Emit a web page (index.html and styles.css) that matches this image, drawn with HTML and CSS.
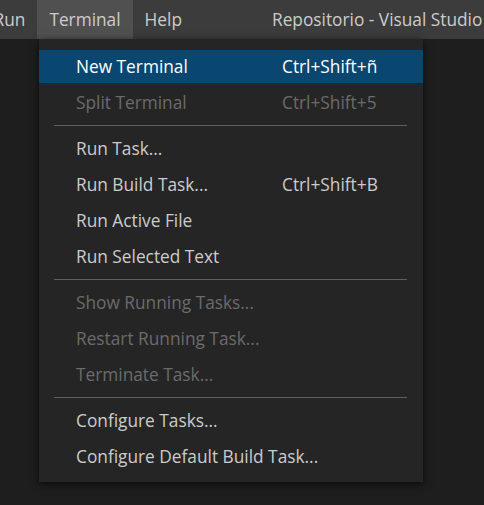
FILE: index.html
```html
<!DOCTYPE html>
<html lang="es">
<head>
<meta charset="utf-8">
<title>Repositorio - Visual Studio Code</title>
<link rel="stylesheet" href="styles.css">
</head>
<body>
<div class="window">
  <header class="titlebar">
    <nav class="menubar">
      <span class="menubar-item">Run</span>
      <span class="menubar-item is-open">Terminal</span>
      <span class="menubar-item">Help</span>
    </nav>
    <div class="window-title">Repositorio - Visual Studio Code</div>
  </header>
  <main class="workbench">
    <div class="menu">
      <div class="menu-item is-active"><span class="label">New Terminal</span><span class="keys">Ctrl+Shift+ñ</span></div>
      <div class="menu-item is-disabled"><span class="label">Split Terminal</span><span class="keys">Ctrl+Shift+5</span></div>
      <div class="menu-sep"></div>
      <div class="menu-item"><span class="label">Run Task...</span><span class="keys"></span></div>
      <div class="menu-item"><span class="label">Run Build Task...</span><span class="keys">Ctrl+Shift+B</span></div>
      <div class="menu-item"><span class="label">Run Active File</span><span class="keys"></span></div>
      <div class="menu-item"><span class="label">Run Selected Text</span><span class="keys"></span></div>
      <div class="menu-sep"></div>
      <div class="menu-item is-disabled"><span class="label">Show Running Tasks...</span><span class="keys"></span></div>
      <div class="menu-item is-disabled"><span class="label">Restart Running Task...</span><span class="keys"></span></div>
      <div class="menu-item is-disabled"><span class="label">Terminate Task...</span><span class="keys"></span></div>
      <div class="menu-sep"></div>
      <div class="menu-item"><span class="label">Configure Tasks...</span><span class="keys"></span></div>
      <div class="menu-item"><span class="label">Configure Default Build Task...</span><span class="keys"></span></div>
    </div>
  </main>
</div>
</body>
</html>
```
FILE: styles.css
```css
* { box-sizing: border-box; }
html, body {
  margin: 0;
  padding: 0;
  width: 484px;
  height: 505px;
  overflow: hidden;
  background: #1e1e1e;
  font-family: "Open Sans", "Noto Sans", sans-serif;
  font-size: 17.3px;
  color: #cccccc;
}
.window {
  display: flex;
  flex-direction: column;
  height: 100%;
}
.titlebar {
  height: 39px;
  flex: none;
  display: flex;
  align-items: stretch;
  background: #3c3c3c;
  white-space: nowrap;
  overflow: hidden;
}
.menubar {
  display: flex;
  margin-left: -18.5px;
}
.menubar-item {
  display: flex;
  align-items: center;
  padding: 0 12px;
  color: #cccccc;
}
.menubar-item.is-open {
  background: #505050;
}
.window-title {
  display: flex;
  align-items: center;
  margin-left: 78px;
  color: #cccccc;
}
.workbench {
  flex: 1;
  padding-left: 39px;
}
.menu {
  width: 384px;
  background: #252526;
  padding: 11px 0 9px;
  display: flex;
  flex-direction: column;
  gap: 3px;
  box-shadow: 0 2px 8px rgba(0, 0, 0, 0.7);
}
.menu-item {
  height: 33px;
  line-height: 33px;
  display: grid;
  grid-template-columns: 206px 1fr;
  padding-left: 37px;
  color: #cccccc;
  white-space: nowrap;
}
.menu-item.is-active {
  background: #094771;
  color: #ffffff;
}
.menu-item.is-disabled {
  color: #6b6b6b;
}
.menu-sep {
  height: 1px;
  margin: 3px 16px 3px 15px;
  background: #5f5f5f;
}
```
